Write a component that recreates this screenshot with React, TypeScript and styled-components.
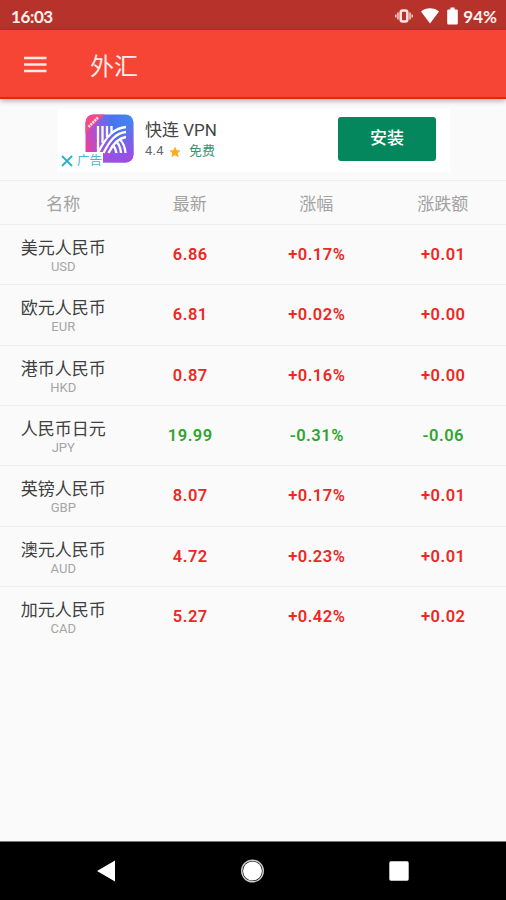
import React from "react";
import styled, { createGlobalStyle } from "styled-components";

const GlobalStyle = createGlobalStyle`
  *, *::before, *::after { box-sizing: border-box; }
  html, body { margin: 0; padding: 0; }
  body {
    background: #fafafa;
    font-family: Roboto, "Noto Sans CJK SC", sans-serif;
  }
`;

const Screen = styled.div`
  display: flex;
  flex-direction: column;
  width: 506px;
  height: 900px;
  overflow: hidden;
  background: #fafafa;
`;

const StatusBar = styled.div`
  display: flex;
  flex: none;
  align-items: center;
  justify-content: space-between;
  height: 30px;
  padding: 3px 9px 0 11px;
  background: #b7322a;
  color: #fff0ee;
  font: 700 17px/26px Lato, sans-serif;
`;

const StatusText = styled.span<{ $spacing?: string }>`
  letter-spacing: ${(p) => p.$spacing ?? "0"};
`;

const StatusIcons = styled.div`
  display: flex;
  align-items: center;

  svg { display: block; }
`;

const StatusGroup = styled(StatusIcons)`
  gap: 8px;
  margin: -2px 5px 0 0;
`;

const AppBar = styled.header`
  display: flex;
  flex: none;
  align-items: center;
  gap: 43px;
  height: 69px;
  padding: 3px 0 0 24px;
  background: #f64435;
  border-bottom: 2px solid #e42515;
  box-shadow: 0 2px 5px rgba(0, 0, 0, 0.3);
  color: #ffeceb;
  z-index: 1;
`;

const Title = styled.h1`
  margin: 0;
  padding-top: 3px;
  font-size: 24px;
  line-height: 36px;
  font-weight: 400;
`;

const AdSlot = styled.div`
  flex: none;
  height: 82px;
  padding: 10px 0 0 57px;
  border-bottom: 1px solid #f0f0f0;
`;

const AdCard = styled.div`
  position: relative;
  display: flex;
  width: 393px;
  height: 63px;
  padding: 5px 14px 0 28px;
  background: #fff;
`;

const AdInfo = styled.div`
  flex: 1;
  padding: 5px 0 0 11px;
`;

const AdName = styled.div`
  font-size: 17px;
  line-height: 23px;
  color: #444;
`;

const AdMeta = styled.div`
  display: flex;
  align-items: center;
  height: 18px;
  font-size: 13px;
  line-height: 18px;
  color: #666;
  letter-spacing: 0.3px;

  svg { margin: 1px 8px 0 5px; }
`;

const Free = styled.span`
  color: #3a9574;
  letter-spacing: 0;
`;

const InstallButton = styled.button`
  width: 98px;
  height: 44px;
  margin: 3px 0 0;
  padding: 0 0 2px;
  border: 0;
  border-radius: 3px;
  background: #04875c;
  color: #fff;
  font: 500 17px/24px Roboto, "Noto Sans CJK SC", sans-serif;
`;

const AdBadge = styled.div`
  position: absolute;
  left: 3px;
  bottom: 2px;
  display: flex;
  align-items: center;
  gap: 4px;
  height: 18px;
  padding: 0 1px 0 1px;
  background: #fff;
  color: #43b9d1;
  font-size: 12.5px;
  line-height: 18px;
`;

const Table = styled.div`
  flex: 1;
`;

const HeaderRow = styled.div`
  display: grid;
  grid-template-columns: repeat(4, 1fr);
  align-items: center;
  height: 44px;
  padding-top: 2px;
  border-bottom: 1px solid #efefef;
  color: #a2a2a2;
  font-size: 17px;
  line-height: 24px;
  text-align: center;
`;

const QuoteRow = styled.div`
  display: grid;
  grid-template-columns: repeat(4, 1fr);
  align-items: center;
  height: 60.33px;
  padding-top: 1px;
  border-bottom: 1px solid #efefef;
  text-align: center;

  &:last-child { border-bottom-color: transparent; }
`;

const Pair = styled.div`
  padding-top: 6px;
`;

const PairName = styled.div`
  font-size: 17px;
  line-height: 24px;
  color: #3f3f3f;
`;

const PairCode = styled.div`
  margin-top: -1px;
  padding-bottom: 5px;
  font-size: 13px;
  line-height: 16px;
  color: #a5a5a5;
`;

const Value = styled.div<{ $down: boolean }>`
  padding-left: 1px;
  font-size: 16.5px;
  line-height: 22px;
  font-weight: 600;
  letter-spacing: 0.5px;
  color: ${(p) => (p.$down ? "#2fa52f" : "#ee2722")};
`;

const NavBar = styled.nav`
  display: flex;
  flex: none;
  align-items: center;
  justify-content: space-between;
  height: 59px;
  padding: 0 97px 1px 97px;
  border-top: 1px solid #777;
  background: #000;
`;

const quotes = [
  { name: "美元人民币", code: "USD", last: "6.86", pct: "+0.17%", diff: "+0.01" },
  { name: "欧元人民币", code: "EUR", last: "6.81", pct: "+0.02%", diff: "+0.00" },
  { name: "港币人民币", code: "HKD", last: "0.87", pct: "+0.16%", diff: "+0.00" },
  { name: "人民币日元", code: "JPY", last: "19.99", pct: "-0.31%", diff: "-0.06" },
  { name: "英镑人民币", code: "GBP", last: "8.07", pct: "+0.17%", diff: "+0.01" },
  { name: "澳元人民币", code: "AUD", last: "4.72", pct: "+0.23%", diff: "+0.01" },
  { name: "加元人民币", code: "CAD", last: "5.27", pct: "+0.42%", diff: "+0.02" },
];

const VibrateIcon = () => (
  <svg width="18" height="16" viewBox="0 0 18 16">
    <path d="M0.8 6.400v3.200M3 4.600v6.800M15 4.600v6.800M17.200 6.400v3.200" stroke="#f3c0ba" strokeWidth="1.700" />
    <rect x="5.700" y="2.500" width="6.600" height="11" rx="2" fill="none" stroke="#ffe4e1" strokeWidth="2.600" />
  </svg>
);

const WifiIcon = () => (
  <svg width="18" height="16" viewBox="0 0 18 16">
    <path d="M0 3.600C5 -0.800 13 -0.800 18 3.600L9 15.600Z" fill="#fff" />
  </svg>
);

const BatteryIcon = () => (
  <svg width="11" height="18" viewBox="0 0 11 18">
    <path d="M3.400 0.600h4.200V2.400H9.600a1.200 1.200 0 0 1 1.200 1.200V16.200a1.200 1.200 0 0 1-1.200 1.200H1.400a1.200 1.200 0 0 1-1.200-1.200V3.600a1.200 1.200 0 0 1 1.200-1.200h2Z" fill="#fff" />
  </svg>
);

const MenuIcon = () => (
  <svg width="23" height="18" viewBox="0 0 23 18">
    <path d="M0 2h22.500M0 8.500h22.500M0 15h22.500" stroke="#ffe9e7" strokeWidth="2.600" />
  </svg>
);

const VpnLogo = () => (
  <svg width="49" height="49" viewBox="0 0 49 49">
    <defs>
      <linearGradient id="vpnBase" x1="0" y1="0.65" x2="1" y2="0.35">
        <stop offset="0" stopColor="#ee3b9c" />
        <stop offset="0.35" stopColor="#945be2" />
        <stop offset="0.65" stopColor="#4a75ee" />
        <stop offset="1" stopColor="#4285f0" />
      </linearGradient>
      <linearGradient id="vpnGlow" x1="0.4" y1="0.5" x2="0.75" y2="1">
        <stop offset="0" stopColor="#a44be4" stopOpacity="0" />
        <stop offset="1" stopColor="#a04be6" />
      </linearGradient>
      <clipPath id="vpnClip"><rect x="0.5" y="0.5" width="48" height="48" rx="8" /></clipPath>
    </defs>
    <g clipPath="url(#vpnClip)">
      <rect width="49" height="49" fill="url(#vpnBase)" />
      <rect width="49" height="49" fill="url(#vpnGlow)" />
      <path d="M0 0H20L0 20Z" fill="#f04c86" />
      <path d="M3.500 13L13 3.500" stroke="#ffd2e2" strokeWidth="2.600" strokeDasharray="2.2 0.6" />
      <g fill="none" stroke="#fff" strokeWidth="2.300">
        <path d="M13 12V38M17.500 12V29M22 12V23M26.500 12V19" />
        <path d="M41 13C30 14 22 21 13.500 38M41 18C31 19 25 26 18.500 39M41 23C33 24 28 30 23.500 39" />
        <path d="M28 31C30 33.500 31 36 31.500 39M31 27.500C34 30 35.500 34 36 39M35 25.500C38.500 29 40 34 40.500 39" />
      </g>
    </g>
  </svg>
);

const StarIcon = () => (
  <svg width="12" height="12" viewBox="0 0 12 12">
    <path d="M6 .4l1.700 3.800 4 .4-3 2.700.9 4L6 9.200l-3.600 2.100.9-4-3-2.700 4-.4Z" fill="#f9ae22" />
  </svg>
);

const CloseIcon = () => (
  <svg width="12" height="12" viewBox="0 0 12 12">
    <path d="M1 1l10 10M11 1L1 11" stroke="#26b0cb" strokeWidth="1.800" />
  </svg>
);

const BackIcon = () => (
  <svg width="18" height="22" viewBox="0 0 18 22">
    <path d="M0 11L18 0.500V21.500Z" fill="#fff" />
  </svg>
);

const HomeIcon = () => (
  <svg width="24" height="24" viewBox="0 0 24 24">
    <circle cx="12.500" cy="12" r="10.800" fill="none" stroke="#ccc" strokeWidth="1.400" />
    <circle cx="12.500" cy="12" r="9.500" fill="#fff" />
  </svg>
);

const RecentsIcon = () => (
  <svg width="20" height="20" viewBox="0 0 20 20">
    <rect x="0.300" y="0.300" width="19.400" height="19.400" rx="1.600" fill="#fff" />
  </svg>
);

export default function App() {
  return (
    <Screen>
      <GlobalStyle />
      <StatusBar>
        <StatusText $spacing="-0.4px">16:03</StatusText>
        <StatusIcons>
          <StatusGroup>
            <VibrateIcon />
            <WifiIcon />
            <BatteryIcon />
          </StatusGroup>
          <StatusText>94%</StatusText>
        </StatusIcons>
      </StatusBar>
      <AppBar>
        <MenuIcon />
        <Title>外汇</Title>
      </AppBar>
      <AdSlot>
        <AdCard>
          <VpnLogo />
          <AdInfo>
            <AdName>快连 VPN</AdName>
            <AdMeta>
              4.4
              <StarIcon />
              <Free>免费</Free>
            </AdMeta>
          </AdInfo>
          <InstallButton>安装</InstallButton>
          <AdBadge>
            <CloseIcon />
            广告
          </AdBadge>
        </AdCard>
      </AdSlot>
      <Table>
        <HeaderRow>
          <span>名称</span>
          <span>最新</span>
          <span>涨幅</span>
          <span>涨跌额</span>
        </HeaderRow>
        {quotes.map((q) => {
          const down = q.diff.startsWith("-");
          return (
            <QuoteRow key={q.code}>
              <Pair>
                <PairName>{q.name}</PairName>
                <PairCode>{q.code}</PairCode>
              </Pair>
              <Value $down={down}>{q.last}</Value>
              <Value $down={down}>{q.pct}</Value>
              <Value $down={down}>{q.diff}</Value>
            </QuoteRow>
          );
        })}
      </Table>
      <NavBar>
        <BackIcon />
        <HomeIcon />
        <RecentsIcon />
      </NavBar>
    </Screen>
  );
}
